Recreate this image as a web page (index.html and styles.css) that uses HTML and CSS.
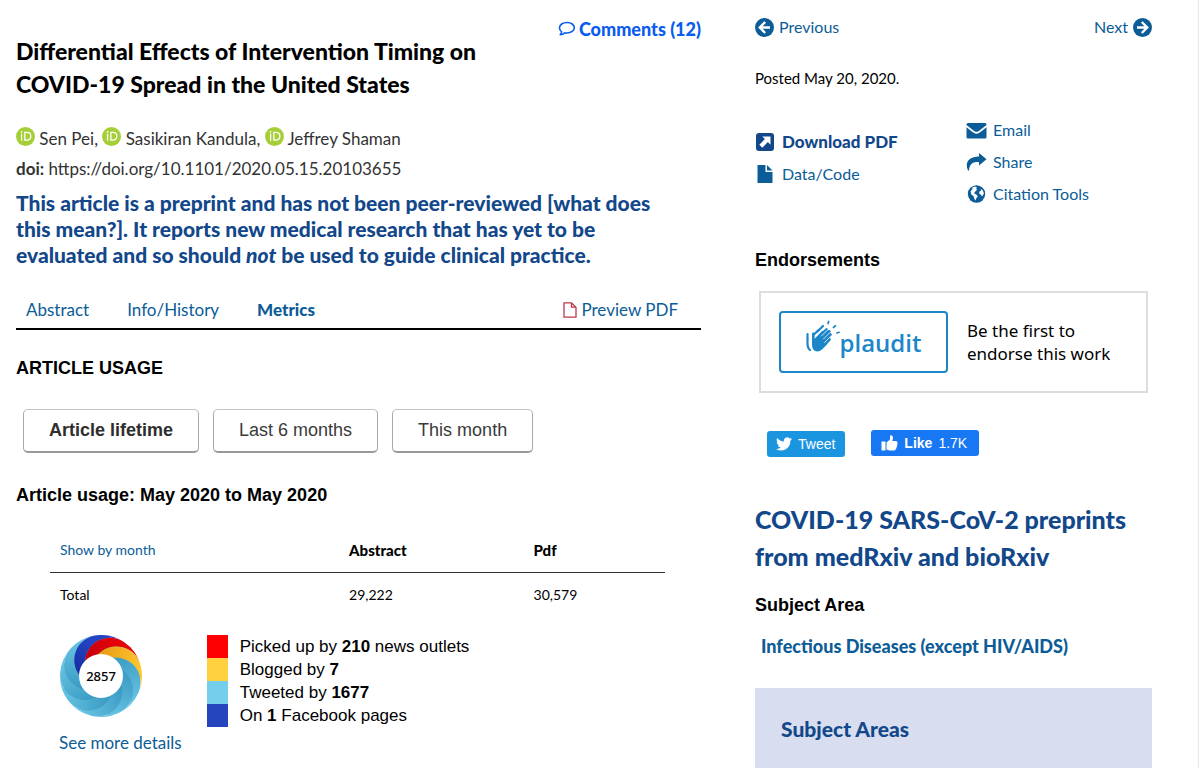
FILE: index.html
```html
<!DOCTYPE html>
<html lang="en">
<head>
<meta charset="utf-8">
<title>Differential Effects of Intervention Timing on COVID-19 Spread in the United States</title>
<link rel="stylesheet" href="styles.css">
</head>
<body>
<svg class="defs" width="0" height="0" aria-hidden="true">
  <symbol id="orcid" viewBox="0 0 18 18">
    <circle cx="9" cy="9" r="9" fill="#a6ce39"/>
    <path d="M5.3 6.5V13M8.4 5.2h1.9c5 0 5 7.3 0 7.3H8.4z" fill="none" stroke="#fff" stroke-width="1.2"/>
    <circle cx="5.3" cy="4.6" r=".8" fill="#fff"/>
  </symbol>
</svg>
<div class="page">
  <main class="article">
    <header class="article-head">
      <h1>Differential Effects of Intervention Timing on<br>COVID-19 Spread in the United States</h1>
      <a class="comments" href="#comments">
        <svg width="18" height="16" viewBox="0 0 18 16"><path d="M9 1.5c4.2 0 7.3 2.3 7.3 5.2S13.2 12 9 12c-.8 0-1.500-.1-2.200-.2C5.500 13 4 13.700 2.200 13.800 3 13 3.500 12 3.600 10.800 2.300 9.800 1.500 8.400 1.500 6.700c0-2.900 3.300-5.200 7.500-5.200z" fill="none" stroke="currentColor" stroke-width="1.600" stroke-linejoin="round"/></svg>
        Comments (12)
      </a>
    </header>
    <p class="meta authors">
      <svg class="orcid" width="19" height="19"><use href="#orcid"/></svg> Sen Pei,
      <svg class="orcid" width="19" height="19"><use href="#orcid"/></svg> Sasikiran Kandula,
      <svg class="orcid" width="19" height="19"><use href="#orcid"/></svg> Jeffrey Shaman
    </p>
    <p class="meta"><strong>doi:</strong> https://doi.org/10.1101/2020.05.15.20103655</p>
    <p class="notice">This article is a preprint and has not been peer-reviewed [what does<br>this mean?]. It reports new medical research that has yet to be<br>evaluated and so should <em>not</em> be used to guide clinical practice.</p>

    <nav class="tabs">
      <a href="#abstract">Abstract</a>
      <a href="#info">Info/History</a>
      <a class="current" href="#metrics">Metrics</a>
      <a class="preview" href="#preview">
        <svg width="14" height="16" viewBox="0 0 14 16"><path d="M1 .8h7.500L13 5.200v10H1zM8.500 .8v4.400H13" fill="none" stroke="#b83a48" stroke-width="1.300"/></svg>
        Preview PDF
      </a>
    </nav>

    <h2 class="label">ARTICLE USAGE</h2>
    <div class="ranges">
      <button class="range active" type="button">Article lifetime</button>
      <button class="range" type="button">Last 6 months</button>
      <button class="range" type="button">This month</button>
    </div>
    <h2 class="label">Article usage: May 2020 to May 2020</h2>

    <table class="usage">
      <thead><tr><td><a href="#months">Show by month</a></td><th scope="col">Abstract</th><th scope="col">Pdf</th></tr></thead>
      <tbody><tr><td>Total</td><td>29,222</td><td>30,579</td></tr></tbody>
    </table>

    <section class="attention">
      <div class="score">
        <svg class="donut" viewBox="-41 -41 82 82" role="img" aria-label="Attention score 2857">
          <defs>
            <path id="petal" d="M2.200 -20.900A25 25 0 0 1 41 0A41 41 0 0 1 31.400 26.400A25 25 0 0 0 15.100 -14.600A21 21 0 0 0 2.200 -20.900Z"/>
            <linearGradient id="sky" x1=".2" y1="0" x2=".8" y2="1"><stop offset="0" stop-color="#3c9cc4"/><stop offset="1" stop-color="#70cbe9"/></linearGradient>
            <linearGradient id="red" x1="0" y1="0" x2="1" y2=".8"><stop offset="0" stop-color="#c00010"/><stop offset=".7" stop-color="#e50208"/></linearGradient>
            <linearGradient id="gold" x1="0" y1="0" x2="1" y2=".8"><stop offset="0" stop-color="#e8970f"/><stop offset="1" stop-color="#ffce38"/></linearGradient>
            <linearGradient id="navy" x1="0" y1="0" x2="1" y2=".8"><stop offset="0" stop-color="#152a9c"/><stop offset=".7" stop-color="#2444c4"/></linearGradient>
          </defs>
          <circle r="39" fill="#4fabd0"/>
          <use href="#petal" fill="url(#sky)" transform="rotate(24)"/>
          <use href="#petal" fill="url(#sky)" transform="rotate(64)"/>
          <use href="#petal" fill="url(#sky)" transform="rotate(104)"/>
          <use href="#petal" fill="url(#sky)" transform="rotate(144)"/>
          <use href="#petal" fill="url(#sky)" transform="rotate(184)"/>
          <use href="#petal" fill="url(#sky)" transform="rotate(224)"/>
          <use href="#petal" fill="url(#navy)" transform="rotate(264)"/>
          <use href="#petal" fill="url(#red)" transform="rotate(304)"/>
          <use href="#petal" fill="url(#gold)" transform="rotate(344)"/>
          <circle r="22" fill="#fff"/>
          <text class="donut-number" y="5" text-anchor="middle">2857</text>
        </svg>
        <a href="#details">See more details</a>
      </div>
      <ul class="legend">
        <li class="news">Picked up by <b>210</b> news outlets</li>
        <li class="blogs">Blogged by <b>7</b></li>
        <li class="tweets">Tweeted by <b>1677</b></li>
        <li class="facebook">On <b>1</b> Facebook pages</li>
      </ul>
    </section>
  </main>

  <aside class="side">
    <nav class="pager">
      <a href="#prev"><svg width="19" height="19" viewBox="0 0 19 19"><circle cx="9.500" cy="9.500" r="9.500" fill="currentColor"/><path d="M10.200 4L4.800 9.500l5.400 5.500M5.200 9.500H15" fill="none" stroke="#fff" stroke-width="2.400"/></svg>Previous</a>
      <a href="#next">Next<svg width="19" height="19" viewBox="0 0 19 19"><circle cx="9.500" cy="9.500" r="9.500" fill="currentColor"/><path d="M8.800 4l5.400 5.500L8.800 15M13.800 9.500H4" fill="none" stroke="#fff" stroke-width="2.400"/></svg></a>
    </nav>
    <p class="posted">Posted May 20, 2020.</p>
    <div class="tools">
      <div class="tool-list files">
        <a class="download" href="#pdf"><svg width="18" height="18" viewBox="0 0 18 18"><rect width="18" height="18" rx="3" fill="currentColor"/><path d="M6.300 3.500h8.200v8.200l-2.600-2.600-5.600 5.600-3-3 5.600-5.600z" fill="#fff"/></svg>Download PDF</a>
        <a href="#data"><svg width="18" height="18" viewBox="0 0 18 18"><path d="M1.500 0h8v7h7v11h-15zM11 0l5.500 5.500H11z" fill="currentColor"/></svg>Data/Code</a>
      </div>
      <div class="tool-list">
        <a href="#email"><svg width="21" height="18" viewBox="0 0 21 18"><path d="M.5 4v-.5Q.5 2 2 2h17q1.500 0 1.500 1.500V4q-5 4-8 6.200-2 1.300-4 0Q5.500 8 .5 4zM.5 6.300Q5 10 8 12q2.500 1.500 5 0 3-2 7.500-5.700V16q0 1.500-1.500 1.500H2Q.5 17.500.5 16z" fill="currentColor"/></svg>Email</a>
        <a href="#share"><svg width="21" height="18" viewBox="0 0 21 18"><path d="M13 0l7.500 6.300L13 12.500V9C6.500 8.600 3.500 11 3 17.500H2C-1.500 9.500 2.500 3.500 13 3.400z" fill="currentColor"/></svg>Share</a>
        <a href="#citation"><svg width="21" height="18" viewBox="0 0 21 18"><circle cx="10.500" cy="9" r="8.700" fill="currentColor"/><path d="M6.500 2.200l2.500-.6 2 .8-1 1.700 1.300.6-1.600 1.300L8 8.200l2.300 1.400 1.600 1.800-1.500 1.600-.9 2.600-1.400-2-.3-2.200-2.600-2.200-.6-3 1.600-2zM14.500 3.500l2.500 2.300.9 2.600-1.800 3.200-1.400-2.200-1.600-.8.3-2.200 1.800-1z" fill="#fff"/></svg>Citation Tools</a>
      </div>
    </div>

    <h2 class="label">Endorsements</h2>
    <div class="endorse">
      <a class="plaudit" href="#plaudit">
        <svg width="36" height="36" viewBox="0 0 36 36" fill="none" stroke="#1b87c9" stroke-linecap="round">
          <path d="M3.500 14v9q0 5 2.500 7M13.500 11.500l5.500-5.500M10.500 14l4-4" stroke-width="2.200"/>
          <path d="M8 13.500q0-1 1.300-1t1.300 1.200v5L18 11l7-1 1.500 7-4 8-4.500 4.500q-3 2.500-6 1.800-4-1-4-7z" fill="#1b87c9" stroke="none"/>
          <path d="M17 15l5.500-5.500M19 18l6.500-6.500M20 21l6.500-6.500M20.500 24.500l5-5" stroke-width="2.600"/>
          <path d="M17.500 16l6-6M19.500 19l6.500-6.500M20.500 22.500l6-6" stroke="#fff" stroke-width=".8"/>
          <path d="M24 3.500l.7-2M29.500 7.500l2-1.800M33 13l2-.7" stroke-width="1.700"/>
        </svg><span>plaudit</span>
      </a>
      <p>Be the first to<br>endorse this work</p>
    </div>

    <div class="social">
      <button class="tweet" type="button"><svg width="16" height="14" viewBox="0 0 24 20"><path d="M24 2.400c-.9.400-1.800.7-2.800.8 1-.6 1.800-1.600 2.200-2.700-1 .6-2 1-3.100 1.200A4.900 4.900 0 0 0 11.900 6.200C7.700 6 4.100 4 1.700 1 .4 3.200 1 6.100 3.200 7.600c-.8 0-1.600-.2-2.200-.6 0 2.300 1.600 4.400 3.900 4.900-.7.200-1.500.2-2.200.1.600 1.900 2.400 3.400 4.600 3.400A9.900 9.900 0 0 1 0 17.500 14 14 0 0 0 21.500 5c1-.7 1.800-1.600 2.500-2.600z" fill="#fff"/></svg>Tweet</button>
      <button class="like" type="button"><svg width="17" height="16" viewBox="0 0 17 16"><path d="M.5 6.500h4V15.500h-4zM5.500 7.500L9 4.500V1Q9.500 0 10.500.3 12 1 12 3L11.300 6H15q1.800.2 1.300 2 .8 1-.3 2 .6 1.200-.5 2 .4 1.200-.7 2-.3 1.500-1.800 1.500H8.500L5.500 14.500z" fill="#fff"/></svg><b>Like</b> 1.7K</button>
    </div>

    <h2 class="collection"><a href="#collection">COVID-19 SARS-CoV-2 preprints from medRxiv and bioRxiv</a></h2>
    <h2 class="label">Subject Area</h2>
    <a class="subject" href="#infectious">Infectious Diseases (except HIV/AIDS)</a>
    <section class="areas"><h2>Subject Areas</h2></section>
  </aside>
</div>
</body>
</html>
```
FILE: styles.css
```css
* { box-sizing: border-box; }
body { margin: 0; background: #fff; color: #000; font-family: Lato, sans-serif; font-size: 16px; }
h1, h2, p, ul { margin: 0; padding: 0; }
a { color: #0b5c97; text-decoration: none; }
svg { flex: none; }
button { font-family: "Liberation Sans", Arial, sans-serif; cursor: pointer; }
.defs { position: absolute; }

.page {
  display: grid;
  grid-template-columns: 685fr 397fr;
  column-gap: 54px;
  height: 100vh;
  overflow: hidden;
  margin-right: 1px;
  padding: 0 46px 0 16px;
  border-right: 1px solid #e8e8e8;
}

.article-head { display: flex; justify-content: space-between; align-items: flex-start; padding-top: 17px; }
h1 { padding-top: 18px; font-size: 23px; line-height: 33px; font-weight: 900; }
.comments { display: flex; align-items: center; gap: 3px; font-size: 18px; line-height: 24px; font-weight: 900; color: #0a5cf0; white-space: nowrap; }

.meta { font-size: 17px; line-height: 30px; color: #333; }
.authors { margin-top: 23px; }
.orcid { vertical-align: -1px; }
.notice { margin-top: 6px; font-size: 21px; line-height: 26px; font-weight: 900; color: #12478a; }

.tabs { display: flex; gap: 38px; margin-top: 28px; padding: 0 23px 4px 10px; border-bottom: 2px solid #000; font-size: 17px; line-height: 28px; }
.tabs .current { font-weight: 900; }
.tabs .preview { display: flex; align-items: center; gap: 4px; margin-left: auto; }

.label { font: bold 18px/24px "Liberation Sans", Arial, sans-serif; }
.tabs + .label { margin-top: 26px; }
.ranges { display: flex; gap: 14px; margin: 29px 0 30px 7px; }
.range { height: 44px; padding: 0 25px; border: 1px solid #aaa; border-top-color: #c4c4c4; border-bottom: 2px solid #999; border-radius: 5px; background: #fff; color: #3a3a3a; font-size: 18px; }
.range.active { font-weight: bold; color: #2e2e2e; }

.usage { width: calc(100% - 70px); margin: 22px 0 0 34px; border-collapse: collapse; table-layout: fixed; font-size: 14px; }
.usage td, .usage th { padding: 0 0 0 10px; text-align: left; line-height: 24px; height: 46px; }
.usage thead td, .usage thead th { height: 43px; border-bottom: 1px solid #333; }
.usage thead td { width: 47%; }
.usage thead th { width: 30%; font-size: 15px; font-weight: 900; }
.usage thead th:last-child { width: 23%; }

.attention { display: flex; gap: 25px; margin: 17px 0 0 43px; }
.score { display: flex; flex-direction: column; gap: 14px; font-size: 17px; line-height: 24px; }
.donut { width: 82px; height: 82px; margin-left: 1px; }
.donut-number { font: 500 13px "Noto Sans", sans-serif; }
.legend { list-style: none; font: 17px/23px "Liberation Sans", Arial, sans-serif; }
.legend li { padding-left: 12px; border-left: 21px solid; }
.legend .news { border-color: #f00; }
.legend .blogs { border-color: #ffd140; }
.legend .tweets { border-color: #74cfed; }
.legend .facebook { border-color: #2445bd; }

.pager { display: flex; justify-content: space-between; padding-top: 15px; line-height: 24px; }
.pager a { display: flex; align-items: center; gap: 5px; }
.posted { margin-top: 27px; font-size: 15px; line-height: 24px; }
.tools { display: grid; grid-template-columns: 211fr 186fr; margin-top: 24px; }
.tool-list { display: flex; flex-direction: column; line-height: 32px; }
.tool-list a { display: flex; align-items: center; gap: 6px; }
.files { padding: 12px 0 0 1px; }
.files a { gap: 8px; }
.tool-list .download { color: #12478a; font-size: 17px; font-weight: 900; }
.tools + .label { margin-top: 38px; }
.endorse { display: flex; align-items: center; gap: 19px; margin: 19px 4px 0; padding: 18px; border: 2px solid #ddd; font: 17px/23px "Noto Sans", sans-serif; }
.plaudit { display: flex; justify-content: center; width: 169px; height: 62px; padding: 7px 2px 0 0; border: 2px solid #1b87c9; border-radius: 4px; color: #1b87c9; font: 600 24px/46px "Open Sans", sans-serif; }
.social { display: flex; gap: 26px; margin: 37px 0 0 12px; }
.social button { display: flex; align-items: center; gap: 6px; height: 26px; border: 0; border-radius: 3px; color: #fff; font-size: 14px; }
.tweet { margin-top: 1px; padding: 0 10px 0 9px; background: #1b95e0; }
.like { padding: 0 12px 0 10px; background: #1877f2; }

.collection { margin-top: 44px; font-size: 25px; line-height: 37px; font-weight: 900; }
.collection a { color: #12478a; }
.collection + .label { margin-top: 18px; }
.subject { display: block; margin: 17px 0 0 6px; font-weight: 900; font-size: 18px; line-height: 24px; }
.areas { margin-top: 30px; padding: 26px; height: 120px; background: #d8def0; }
.areas h2 { font-size: 21px; line-height: 30px; font-weight: 900; color: #12478a; }
```
